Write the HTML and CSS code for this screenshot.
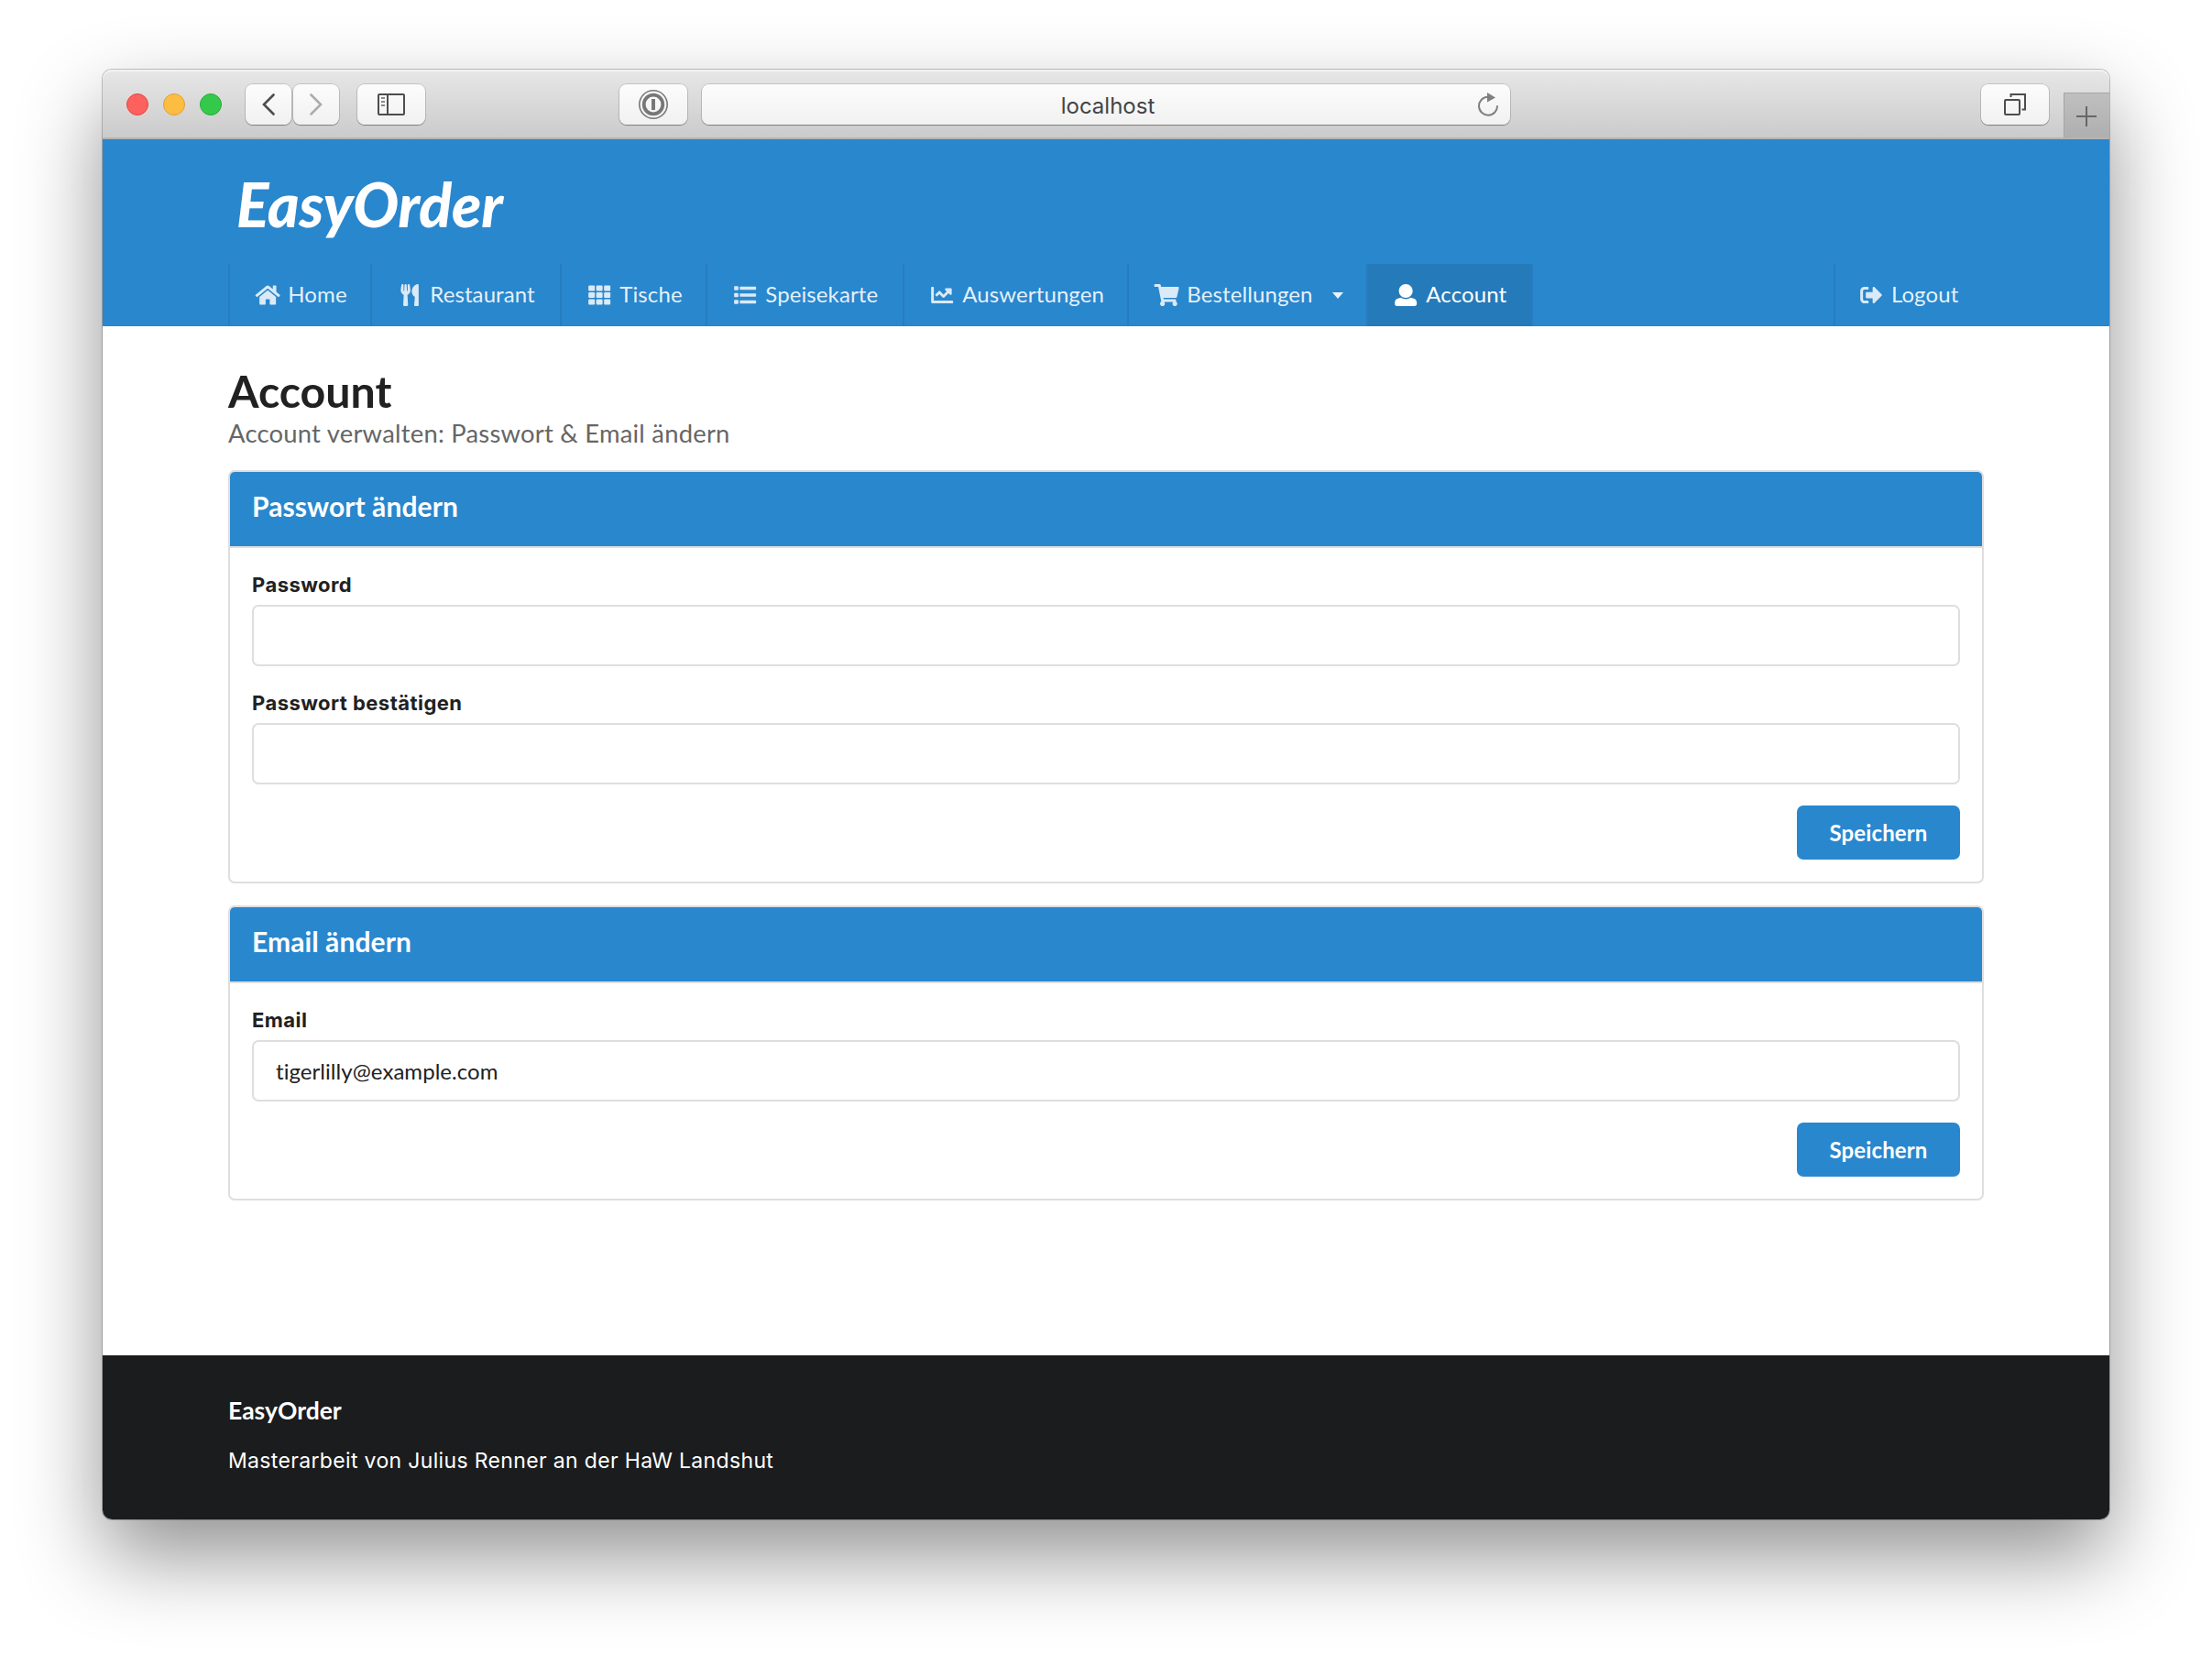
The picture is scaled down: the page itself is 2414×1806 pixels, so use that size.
FILE: index.html
```html
<!DOCTYPE html>
<html lang="de">
<head>
<meta charset="utf-8">
<title>EasyOrder – Account</title>
<link rel="stylesheet" href="styles.css">
</head>
<body>
<div class="window">
  <div class="toolbar">
    <span class="light red"></span><span class="light yellow"></span><span class="light green"></span>
    <div class="tool back"><svg width="14" height="24" viewBox="0 0 14 24"><path d="M12.5 1.5L2 12l10.500 10.500" fill="none" stroke="#4d4d4d" stroke-width="2.600" stroke-linecap="round"/></svg></div>
    <div class="tool forward"><svg width="14" height="24" viewBox="0 0 14 24"><path d="M1.500 1.500L12 12 1.500 22.500" fill="none" stroke="#acacac" stroke-width="2.600" stroke-linecap="round"/></svg></div>
    <div class="tool sidebar"><svg width="30" height="24" viewBox="0 0 30 24" fill="none" stroke="#4d4d4d" stroke-width="2"><rect x="1" y="1" width="28" height="22" rx="1"/><path d="M11 1v22"/><path d="M4 5h4M4 9h4M4 13h4" stroke="#8a8a8a"/></svg></div>
    <div class="tool password"><svg width="32" height="32" viewBox="0 0 32 32" fill="none" stroke="#777"><circle cx="16" cy="16" r="15.200" stroke-width="1.600"/><circle cx="16" cy="16" r="10.300" stroke-width="3.800"/><path d="M16 10v12" stroke-width="4"/></svg></div>
    <div class="address"><span>localhost</span><svg class="reload" width="22" height="26" viewBox="0 0 22 26"><path d="M10.500 4.700a10 10 0 1 0 10.500 9.600" fill="none" stroke="#808080" stroke-width="2"/><path d="M10 0l9 5.500-9 5z" fill="#808080"/></svg></div>
    <div class="tool tabs"><svg width="24" height="24" viewBox="0 0 24 24" fill="none" stroke="#4d4d4d" stroke-width="2"><rect x="1" y="7" width="16" height="16" rx="1"/><path d="M7.500 4V1H23v16.500h-3.500"/></svg></div>
    <div class="newtab"><svg width="22" height="22" viewBox="0 0 22 22"><path d="M11 0v22M0 11h22" stroke="#666" stroke-width="2"/></svg></div>
  </div>
  <header class="header">
    <div class="logo">EasyOrder</div>
    <nav class="menu">
      <a class="item home"><svg class="icon" viewBox="0 0 576 512"><path d="M280.370 148.260L96 300.110V464a16 16 0 0 0 16 16l112.060-.290a16 16 0 0 0 15.920-16V368a16 16 0 0 1 16-16h64a16 16 0 0 1 16 16v95.640a16 16 0 0 0 16 16.050L464 480a16 16 0 0 0 16-16V300L295.670 148.260a12.190 12.190 0 0 0-15.300 0zM571.600 251.470L488 182.560V44.050a12 12 0 0 0-12-12h-56a12 12 0 0 0-12 12v72.610L318.470 43a48 48 0 0 0-61 0L4.340 251.470a12 12 0 0 0-1.600 16.900l25.500 31A12 12 0 0 0 45.150 301l235.220-193.740a12.190 12.190 0 0 1 15.300 0L530.900 301a12 12 0 0 0 16.900-1.600l25.500-31a12 12 0 0 0-1.700-16.930z"/></svg>Home</a>
      <a class="item restaurant"><svg class="icon" viewBox="0 0 416 512"><path d="M207.900 15.200c.8 4.700 16.100 94.500 16.100 128.800 0 52.300-27.800 89.600-68.900 104.600L168 486.700c.7 13.700-10.200 25.300-24 25.300H80c-13.700 0-24.700-11.500-24-25.300l12.900-238.100C27.700 233.600 0 196.200 0 144 0 109.600 15.300 19.900 16.100 15.200 19.300-5.100 61.400-5.400 64 16.300v141.200c1.300 3.400 15.100 3.200 16 0 1.400-25.300 7.900-139.200 8-141.800 3.300-20.800 44.700-20.800 47.900 0 .2 2.700 6.600 116.500 8 141.800.9 3.200 14.800 3.400 16 0V16.300c2.600-21.600 44.800-21.400 48-1.100zm119.200 285.700l-15 185.100c-1.200 14 9.900 26 23.900 26h56c13.300 0 24-10.700 24-24V24c0-13.200-10.700-24-24-24-82.500 0-221.400 178.500-64.900 300.900z"/></svg>Restaurant</a>
      <a class="item tables"><svg class="icon" viewBox="0 0 512 512"><rect x="0" y="32" width="149" height="128" rx="24"/><rect x="181" y="32" width="149" height="128" rx="24"/><rect x="363" y="32" width="149" height="128" rx="24"/><rect x="0" y="192" width="149" height="128" rx="24"/><rect x="181" y="192" width="149" height="128" rx="24"/><rect x="363" y="192" width="149" height="128" rx="24"/><rect x="0" y="352" width="149" height="128" rx="24"/><rect x="181" y="352" width="149" height="128" rx="24"/><rect x="363" y="352" width="149" height="128" rx="24"/></svg>Tische</a>
      <a class="item dishes"><svg class="icon" viewBox="0 0 512 512"><rect x="0" y="48" width="100" height="96" rx="16"/><rect x="0" y="208" width="100" height="96" rx="16"/><rect x="0" y="368" width="100" height="96" rx="16"/><rect x="132" y="60" width="380" height="72" rx="16"/><rect x="132" y="220" width="380" height="72" rx="16"/><rect x="132" y="380" width="380" height="72" rx="16"/></svg>Speisekarte</a>
      <a class="item reports"><svg class="icon" viewBox="0 0 512 512"><path d="M496 384H64V80c0-8.840-7.160-16-16-16H16C7.160 64 0 71.160 0 80v336c0 17.670 14.330 32 32 32h464c8.840 0 16-7.160 16-16v-32c0-8.840-7.160-16-16-16zM464 96H345.940c-21.380 0-32.090 25.850-16.970 40.970l32.400 32.400L288 242.750l-73.370-73.370c-12.500-12.500-32.760-12.500-45.250 0l-68.690 68.690c-6.250 6.250-6.250 16.380 0 22.630l22.620 22.620c6.250 6.250 16.380 6.250 22.630 0L192 237.250l73.370 73.370c12.500 12.500 32.760 12.500 45.250 0l96-96 32.400 32.400c15.120 15.120 40.970 4.410 40.970-16.970V112c.01-8.840-7.150-16-15.990-16z"/></svg>Auswertungen</a>
      <a class="item orders"><svg class="icon" viewBox="0 0 576 512"><path d="M528.120 301.319l47.273-208C578.806 78.301 567.391 64 551.990 64H159.208l-9.166-44.810C147.758 8.021 137.930 0 126.529 0H24C10.745 0 0 10.745 0 24v16c0 13.255 10.745 24 24 24h69.883l70.248 343.435C147.325 417.100 136 435.222 136 456c0 30.928 25.072 56 56 56s56-25.072 56-56c0-15.674-6.447-29.835-16.824-40h209.647C430.447 426.165 424 440.326 424 456c0 30.928 25.072 56 56 56s56-25.072 56-56c0-22.172-12.888-41.332-31.579-50.405l5.517-24.276c3.413-15.018-8.002-29.319-23.403-29.319H218.117l-6.545-32h293.145c11.206 0 20.920-7.754 23.403-18.681z"/></svg>Bestellungen<svg class="caret" viewBox="0 0 12 7"><path d="M0 0h12L6 7z"/></svg></a>
      <a class="item account active"><svg class="icon" viewBox="0 0 512 512"><path d="M256 0c88.366 0 160 71.634 160 160s-71.634 160-160 160S96 248.366 96 160 167.634 0 256 0zm183.283 333.821l-71.313-17.828c-74.923 53.890-165.738 41.864-223.940 0l-71.313 17.828C29.981 344.505 0 382.903 0 426.955V464c0 26.510 21.490 48 48 48h416c26.510 0 48-21.490 48-48v-37.045c0-44.052-29.981-82.450-72.717-93.134z"/></svg>Account</a>
      <a class="item logout"><svg class="icon" viewBox="0 0 512 512"><path d="M497 273L329 441c-15 15-41 4.500-41-17v-96H152c-13.300 0-24-10.700-24-24v-96c0-13.300 10.700-24 24-24h136V88c0-21.400 25.900-32 41-17l168 168c9.300 9.400 9.300 24.600 0 34zM192 436v-40c0-6.600-5.400-12-12-12H96c-17.700 0-32-14.300-32-32V160c0-17.700 14.300-32 32-32h84c6.600 0 12-5.400 12-12V76c0-6.600-5.400-12-12-12H96c-53 0-96 43-96 96v192c0 53 43 96 96 96h84c6.600 0 12-5.400 12-12z"/></svg>Logout</a>
    </nav>
  </header>
  <main class="content">
    <h1 class="title">Account</h1>
    <p class="subtitle">Account verwalten: Passwort &amp; Email ändern</p>
    <section class="card">
      <h2 class="card-title">Passwort ändern</h2>
      <form class="card-body">
        <label class="label" for="password">Password</label>
        <input class="input" id="password" type="password">
        <label class="label" for="confirm">Passwort bestätigen</label>
        <input class="input" id="confirm" type="password">
        <button class="button" type="button">Speichern</button>
      </form>
    </section>
    <section class="card">
      <h2 class="card-title">Email ändern</h2>
      <form class="card-body">
        <label class="label" for="email">Email</label>
        <input class="input" id="email" type="text" value="tigerlilly@example.com">
        <button class="button" type="button">Speichern</button>
      </form>
    </section>
  </main>
  <footer class="footer">
    <h4 class="footer-title">EasyOrder</h4>
    <p class="footer-text">Masterarbeit von Julius Renner an der HaW Landshut</p>
  </footer>
</div>
</body>
</html>
```
FILE: styles.css
```css
* { box-sizing: border-box; }
body {
  margin: 0;
  padding: 76px 112px 0;
  height: 1806px;
  overflow: hidden;
  background: #fff;
  font: 24px/1.2 Lato, sans-serif;
  font-variant-ligatures: none;
  color: #212121;
}
h1, h2, h4, p { margin: 0; }
.window {
  width: 2190px;
  height: 1582px;
  display: flex;
  flex-direction: column;
  border-radius: 10px;
  background: #fff;
  box-shadow: 0 0 0 1px rgba(0,0,0,.22), 0 40px 90px rgba(0,0,0,.43);
}

/* Browser toolbar */
.toolbar {
  height: 76px;
  flex: none;
  display: flex;
  align-items: flex-start;
  padding: 16px 0 0 26px;
  border-radius: 10px 10px 0 0;
  border-bottom: 2px solid #b3b3b3;
  background: linear-gradient(#e7e7e7, #cbcbcb);
  box-shadow: inset 0 2px 0 #f3f3f3;
}
.light { width: 24px; height: 24px; margin: 10px 16px 0 0; border-radius: 50%; border: 1px solid; }
.red { background: #fc615d; border-color: #e2463f; }
.yellow { background: #fdbd41; border-color: #e0a034; }
.green { background: #34c94a; border-color: #27ad36; }
.tool, .address {
  height: 44px;
  display: flex;
  align-items: center;
  justify-content: center;
  border-radius: 8px;
  background: linear-gradient(#fcfcfc, #f1f1f1);
  box-shadow: 0 0 0 1px rgba(0,0,0,.13), 0 1px 1px rgba(0,0,0,.3);
}
.back { width: 50px; margin-left: 10px; }
.forward { width: 50px; margin-left: 2px; }
.sidebar { width: 74px; margin-left: 20px; }
.password { width: 74px; margin-left: 212px; }
.address {
  position: relative;
  width: 882px;
  margin-left: 16px;
  padding: 2px 0 0 4px;
  font: 24px Inter, sans-serif;
  color: #444;
}
.reload { position: absolute; right: 13px; top: 9px; }
.tabs { width: 74px; margin-left: 514px; }
.newtab {
  width: 50px;
  height: 49px;
  margin: 9px 0 0 auto;
  padding: 2px 2px 0 0;
  display: flex;
  align-items: center;
  justify-content: center;
  border: solid #a5a5a5;
  border-width: 1px 0 0 1px;
  background: linear-gradient(#bfbfbf, #afafaf);
}

/* Site header */
.header { height: 204px; flex: none; padding: 0 137px; background: #2987ce; color: #fff; }
.logo {
  height: 136px;
  padding: 31px 0 0 9px;
  font: italic 900 66px/80px Lato, cursive;
  letter-spacing: -.2px;
}
.menu { height: 68px; display: flex; border-left: 2px solid #277dbf; }
.item {
  flex: none;
  display: flex;
  align-items: center;
  padding: 0 0 1px 27.400px;
  border-right: 2px solid #277dbf;
  color: rgba(255,255,255,.9);
  letter-spacing: .1px;
  white-space: nowrap;
}
.home { width: 155px; }
.restaurant { width: 207px; }
.tables { width: 159px; }
.dishes { width: 215px; }
.reports { width: 245px; }
.orders { width: 261px; }
.account { width: 180px; }
.logout { width: 164px; margin-left: auto; }
.icon { width: 28.300px; height: 24px; margin-right: 7.600px; fill: currentColor; opacity: .92; }
.caret { width: 12px; height: 7px; margin: 2px 0 0 21px; fill: currentColor; }
.active { background: #257ab9; color: #fff; }
.active .icon { opacity: 1; }
.item.logout { border-right: 0; border-left: 2px solid #277dbf; padding-left: 25px; }

/* Page content */
.content { flex: 1; padding: 45px 137px 0; }
.title { font-size: 48.300px; line-height: 50px; font-weight: 700; }
.subtitle { margin: 5px 0 24px; font-size: 27.400px; line-height: 33px; letter-spacing: .23px; color: #666; }
.card {
  margin-bottom: 24px;
  border: 2px solid #dededf;
  border-radius: 7px;
  overflow: hidden;
}
.card-title {
  height: 83px;
  padding: 19px 24px 0;
  border-bottom: 2px solid #dededf;
  background: #2987ce;
  color: #fff;
  font-size: 30px;
  line-height: 36px;
  font-weight: 700;
  letter-spacing: .08px;
}
.card-body { display: flex; flex-direction: column; padding: 26px 24px 24px; }
.label { margin-bottom: 8px; font: 700 22px/28px Inter, sans-serif; letter-spacing: .45px; }
.input {
  height: 67px;
  margin: 0 0 26px;
  padding: 0 24px;
  border: 2px solid #dededf;
  border-radius: 7px;
  outline: 0;
  background: #fff;
  color: #212121;
  font: 24px Lato, sans-serif;
  font-variant-ligatures: none;
  letter-spacing: .05px;
}
.button {
  align-self: flex-end;
  width: 178px;
  height: 59px;
  margin-top: -3px;
  padding: 0;
  border: 0;
  border-radius: 7px;
  background: #2987ce;
  color: #fff;
  font: 700 24px/58px Lato, sans-serif;
  letter-spacing: .12px;
}

.footer {
  height: 179px;
  flex: none;
  padding: 44px 137px;
  border-radius: 0 0 10px 10px;
  background: #1b1c1d;
  color: #fff;
}
.footer-title { font-size: 26.500px; line-height: 32px; }
.footer-text { margin-top: 24px; font: 23px/30px Inter, sans-serif; letter-spacing: .34px; }
```
